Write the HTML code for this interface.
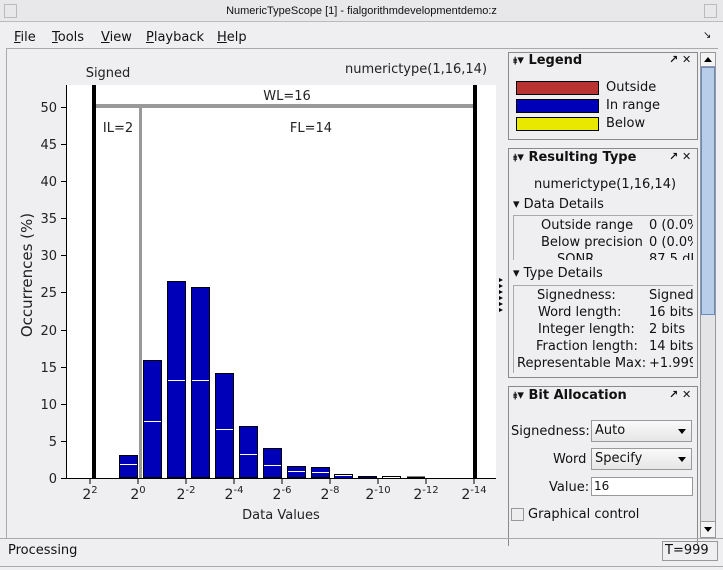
<!DOCTYPE html>
<html><head><style>
*{margin:0;padding:0;box-sizing:border-box}
body{width:723px;height:570px;background:#efeef0;font-family:"DejaVu Sans","Liberation Sans",sans-serif;font-size:13px;color:#111;position:relative;overflow:hidden}
.a{position:absolute;white-space:nowrap}
.panel{position:absolute;border:1px solid #8a8a8a;background:#efeef0}
.ph{font-weight:bold;font-size:13px}
.sw{position:absolute;width:83px;height:14px;border:1px solid #000}
.dd{position:absolute;height:22px;border:1px solid #9a9a9a;background:linear-gradient(#fafafa,#e6e6e6);font-size:13px;padding:2px 3px}
.dd:after{content:"";position:absolute;right:5px;top:8px;border-left:4px solid transparent;border-right:4px solid transparent;border-top:5px solid #000}
</style></head><body>
<!-- title bar -->
<div class="a" style="left:0;top:0;width:723px;height:22px;background:#e8e7ea;border-bottom:1px solid #bbb"></div>
<div class="a" style="left:4px;top:4px;width:13px;height:14px;border:1px solid #bbb"></div>
<div class="a" style="left:704px;top:4px;width:13px;height:14px;border:1px solid #bbb"></div>
<div class="a" style="left:0;top:5px;width:723px;text-align:center;font-family:'Liberation Sans',sans-serif;font-size:11px">NumericTypeScope [1] - fialgorithmdevelopmentdemo:z</div>
<!-- menu -->
<div class="a" style="left:14px;top:30px"><u>F</u>ile</div>
<div class="a" style="left:52px;top:30px"><u>T</u>ools</div>
<div class="a" style="left:101px;top:30px"><u>V</u>iew</div>
<div class="a" style="left:146px;top:30px"><u>P</u>layback</div>
<div class="a" style="left:217px;top:30px"><u>H</u>elp</div>
<div class="a" style="left:703px;top:30px;font-size:10px">↘</div>
<div class="a" style="left:6px;top:48px;width:712px;height:1px;background:#aaa"></div>
<div class="a" style="left:6px;top:48px;width:1px;height:490px;background:#aaa"></div>

<!-- plot -->
<svg class="a" style="left:0;top:48px" width="505" height="490" viewBox="0 48 505 490">
<rect x="66" y="85" width="430" height="393" fill="#fff"/>
<g fill="#0000b8" stroke="#000" stroke-width="1">
<rect x="119.5" y="455.5" width="18" height="22"/>
<rect x="143.5" y="360.5" width="18" height="117"/>
<rect x="167.5" y="281.5" width="18" height="196"/>
<rect x="191.5" y="287.5" width="18" height="190"/>
<rect x="215.5" y="373.5" width="18" height="104"/>
<rect x="239.5" y="426.5" width="18" height="51"/>
<rect x="263.5" y="448.5" width="18" height="29"/>
<rect x="287.5" y="466.5" width="18" height="11"/>
<rect x="311.5" y="467.5" width="18" height="10"/>
<rect x="358.5" y="476.5" width="18" height="1.5"/>
</g>
<rect x="334.5" y="474.5" width="18" height="3.5" fill="#fff" stroke="#000"/>
<rect x="335" y="476" width="17" height="2" fill="#0000b8"/>
<rect x="382.5" y="476.5" width="18" height="2" fill="#fff" stroke="#000"/>
<rect x="407.5" y="477" width="17" height="1" fill="#fff" stroke="#000"/>
<g stroke="#fff" stroke-width="1">
<line x1="120" x2="137" y1="464.5" y2="464.5"/><line x1="144" x2="161" y1="421.5" y2="421.5"/>
<line x1="168" x2="185" y1="380.5" y2="380.5"/><line x1="192" x2="209" y1="380.5" y2="380.5"/>
<line x1="216" x2="233" y1="429.5" y2="429.5"/><line x1="240" x2="257" y1="454.5" y2="454.5"/>
<line x1="264" x2="281" y1="465.5" y2="465.5"/><line x1="288" x2="305" y1="471.5" y2="471.5"/>
<line x1="312" x2="329" y1="472.5" y2="472.5"/>
</g>
<rect x="92" y="85" width="4" height="393" fill="#000"/>
<rect x="473" y="85" width="4" height="393" fill="#000"/>
<rect x="96" y="104" width="377" height="4" fill="#999"/>
<rect x="139" y="108" width="3" height="370" fill="#999"/>
<g stroke="#000"><line x1="66.5" x2="66.5" y1="85" y2="479"/><line x1="66" x2="496" y1="478.5" y2="478.5"/>
<line x1="61" x2="66" y1="478.5" y2="478.5"/><line x1="61" x2="66" y1="441.5" y2="441.5"/><line x1="61" x2="66" y1="404.5" y2="404.5"/><line x1="61" x2="66" y1="367.5" y2="367.5"/><line x1="61" x2="66" y1="330.5" y2="330.5"/><line x1="61" x2="66" y1="292.5" y2="292.5"/><line x1="61" x2="66" y1="255.5" y2="255.5"/><line x1="61" x2="66" y1="218.5" y2="218.5"/><line x1="61" x2="66" y1="181.5" y2="181.5"/><line x1="61" x2="66" y1="144.5" y2="144.5"/><line x1="61" x2="66" y1="107.5" y2="107.5"/>
<line x1="90" x2="90" y1="478" y2="484"/><line x1="138" x2="138" y1="478" y2="484"/><line x1="186" x2="186" y1="478" y2="484"/><line x1="234" x2="234" y1="478" y2="484"/><line x1="282" x2="282" y1="478" y2="484"/><line x1="330" x2="330" y1="478" y2="484"/><line x1="378" x2="378" y1="478" y2="484"/><line x1="426" x2="426" y1="478" y2="484"/><line x1="474" x2="474" y1="478" y2="484"/>
</g>
<g font-family="DejaVu Sans" font-size="13" fill="#222" text-anchor="end">
<text x="57" y="483">0</text><text x="57" y="446">5</text><text x="57" y="409">10</text><text x="57" y="372">15</text><text x="57" y="335">20</text><text x="57" y="297">25</text><text x="57" y="260">30</text><text x="57" y="223">35</text><text x="57" y="186">40</text><text x="57" y="149">45</text><text x="57" y="112">50</text>
</g>
<g font-family="DejaVu Sans" font-size="14" fill="#222" text-anchor="middle">
<text x="90" y="499">2<tspan font-size="10" dy="-6">2</tspan></text>
<text x="138" y="499">2<tspan font-size="10" dy="-6">0</tspan></text>
<text x="186" y="499">2<tspan font-size="10" dy="-6">-2</tspan></text>
<text x="234" y="499">2<tspan font-size="10" dy="-6">-4</tspan></text>
<text x="282" y="499">2<tspan font-size="10" dy="-6">-6</tspan></text>
<text x="330" y="499">2<tspan font-size="10" dy="-6">-8</tspan></text>
<text x="378" y="499">2<tspan font-size="10" dy="-6">-10</tspan></text>
<text x="426" y="499">2<tspan font-size="10" dy="-6">-12</tspan></text>
<text x="474" y="499">2<tspan font-size="10" dy="-6">-14</tspan></text>
<text x="281" y="519" font-size="13">Data Values</text>
<text x="287" y="100" font-size="13">WL=16</text>
<text x="118" y="132" font-size="13">IL=2</text>
<text x="311" y="132" font-size="13">FL=14</text>
<text x="108" y="77" font-size="13">Signed</text>
<text x="416" y="73" font-size="13">numerictype(1,16,14)</text>
<text transform="translate(32,275) rotate(-90)" font-size="15">Occurrences (%)</text>
</g>
<g fill="#000"><polygon points="499,278 503,280 499,282"/><polygon points="499,284 503,286 499,288"/><polygon points="499,290 503,292 499,294"/><polygon points="499,296 503,298 499,300"/><polygon points="499,302 503,304 499,306"/><polygon points="499,308 503,310 499,312"/></g>
</svg>

<!-- Legend panel -->
<div class="panel" style="left:508px;top:52px;width:190px;height:88px"></div>
<div class="a ph" style="left:513px;top:53px"><span style="font-size:10px">⯒</span>▾ Legend</div>
<div class="a" style="left:669px;top:53px;font-size:11px;font-weight:bold">↗ ✕</div>
<div class="sw" style="left:516px;top:81px;background:#b83232"></div><div class="a" style="left:606px;top:80px">Outside</div>
<div class="sw" style="left:516px;top:99px;background:#0000b8"></div><div class="a" style="left:606px;top:98px">In range</div>
<div class="sw" style="left:516px;top:117px;background:#e8e800"></div><div class="a" style="left:606px;top:116px">Below</div>

<!-- Resulting Type -->
<div class="panel" style="left:508px;top:148px;width:190px;height:230px"></div>
<div class="a ph" style="left:513px;top:150px"><span style="font-size:10px">⯒</span>▾ Resulting Type</div>
<div class="a" style="left:669px;top:150px;font-size:11px;font-weight:bold">↗ ✕</div>
<div class="a" style="left:534px;top:177px">numerictype(1,16,14)</div>
<div class="a" style="left:513px;top:197px">▾ Data Details</div>
<div class="a" style="left:513px;top:215px;width:180px;height:45px;border-left:1px solid #aaa;border-top:1px solid #aaa;overflow:hidden">
 <div class="a" style="left:27px;top:2px">Outside range</div><div class="a" style="left:135px;top:2px">0 (0.0%</div>
 <div class="a" style="left:27px;top:19px">Below precision</div><div class="a" style="left:135px;top:19px">0 (0.0%</div>
 <div class="a" style="left:43px;top:36px">SQNR</div><div class="a" style="left:135px;top:36px">87.5 dB</div>
</div>
<div class="a" style="left:513px;top:266px">▾ Type Details</div>
<div class="a" style="left:513px;top:285px;width:180px;height:88px;border-left:1px solid #aaa;border-top:1px solid #aaa;overflow:hidden">
 <div class="a" style="left:23px;top:2px">Signedness:</div><div class="a" style="left:135px;top:2px">Signed</div>
 <div class="a" style="left:24px;top:19px">Word length:</div><div class="a" style="left:135px;top:19px">16 bits</div>
 <div class="a" style="left:24px;top:36px">Integer length:</div><div class="a" style="left:135px;top:36px">2 bits</div>
 <div class="a" style="left:22px;top:53px">Fraction length:</div><div class="a" style="left:135px;top:53px">14 bits</div>
 <div class="a" style="left:3px;top:70px">Representable Max:</div><div class="a" style="left:135px;top:70px">+1.9999</div>
</div>

<!-- Bit allocation -->
<div class="panel" style="left:508px;top:386px;width:190px;height:160px;border-bottom:none"></div>
<div class="a ph" style="left:513px;top:388px"><span style="font-size:10px">⯒</span>▾ Bit Allocation</div>
<div class="a" style="left:669px;top:388px;font-size:11px;font-weight:bold">↗ ✕</div>
<div class="a" style="left:511px;top:424px">Signedness:</div>
<div class="dd" style="left:591px;top:420px;width:101px">Auto</div>
<div class="a" style="left:553px;top:452px">Word</div>
<div class="dd" style="left:591px;top:448px;width:101px">Specify</div>
<div class="a" style="left:549px;top:480px">Value:</div>
<div class="a" style="left:591px;top:477px;width:102px;height:19px;border:1px solid #999;background:#fff;padding:1px 2px;font-size:12px">16</div>
<div class="a" style="left:511px;top:508px;width:13px;height:13px;border:1px solid #999;background:#eee"></div>
<div class="a" style="left:528px;top:507px">Graphical control</div>

<!-- scrollbar -->
<div class="a" style="left:700px;top:52px;width:16px;height:486px;background:#e4e4e6;border:1px solid #999"></div>
<div class="a" style="left:701px;top:53px;width:14px;height:14px;background:#f3f3f3;border-bottom:1px solid #999"></div>
<div class="a" style="left:704px;top:57px;border-left:4px solid transparent;border-right:4px solid transparent;border-bottom:5px solid #000"></div>
<div class="a" style="left:701px;top:67px;width:14px;height:248px;background:#b8cdea;border:1px solid #6a8ac0"></div>
<div class="a" style="left:701px;top:521px;width:14px;height:16px;background:#f3f3f3;border-top:1px solid #999"></div>
<div class="a" style="left:704px;top:527px;border-left:4px solid transparent;border-right:4px solid transparent;border-top:5px solid #000"></div>

<!-- status -->
<div class="a" style="left:0;top:538px;width:723px;height:1px;background:#aaa"></div>
<div class="a" style="left:8px;top:543px">Processing</div>
<div class="a" style="left:662px;top:541px;width:56px;height:20px;border:1px solid #999;padding:1px 2px">T=999</div>
<div class="a" style="left:0;top:566px;width:723px;height:1px;background:#aaa"></div>
</body></html>
